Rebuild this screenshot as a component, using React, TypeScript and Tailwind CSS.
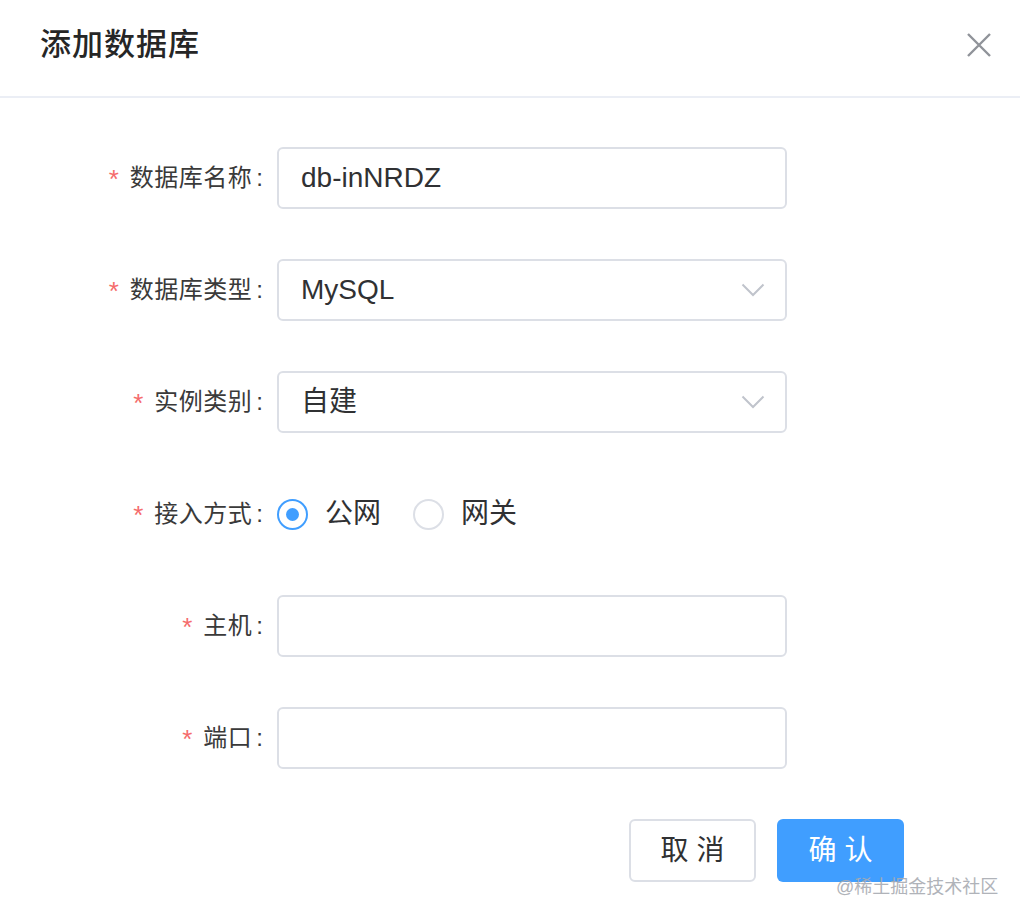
import React from 'react';

const Chevron = () => (
  <svg width="24" height="14" viewBox="0 0 24 14" fill="none">
    <path d="M1.5 1.5 L12 12 L22.5 1.5" stroke="#c0c4cc" strokeWidth="2" />
  </svg>
);

const Label = ({ text }: { text: string }) => (
  <div className="w-[277px] shrink-0 pr-[14px] flex justify-end items-center text-[24px] text-[#3a3a3a]">
    <span className="text-[#f56c6c] text-[26px] mr-[11px] mt-[2px]">*</span>
    <span className="tracking-[0.5px]">{text}</span>
    <span className="ml-[4px]">:</span>
  </div>
);

const Field = ({ value, select }: { value?: string; select?: boolean }) => (
  <div className="w-[510px] h-[62px] border-2 border-[#dcdfe6] rounded-[6px] flex items-center justify-between pl-[22px] pr-[20px] text-[28px] text-[#303133]">
    <span>{value}</span>
    {select && <Chevron />}
  </div>
);

const Radio = ({ label, checked }: { label: string; checked?: boolean }) => (
  <div className="flex items-center">
    <span
      className={
        checked
          ? 'w-[31px] h-[31px] rounded-full border-2 border-[#409eff] bg-white flex items-center justify-center'
          : 'w-[31px] h-[31px] rounded-full border-2 border-[#dcdfe6] bg-white'
      }
    >
      {checked && <span className="w-[13px] h-[13px] rounded-full bg-[#409eff]" />}
    </span>
    <span className="ml-[17px] text-[28px] text-[#303133]">{label}</span>
  </div>
);

export default function App() {
  return (
    <div
      className="relative w-[1020px] h-[922px] bg-white overflow-hidden"
      style={{ fontFamily: '"Liberation Sans", "Noto Sans CJK SC", sans-serif' }}
    >
      {/* header */}
      <div className="h-[98px] border-b-2 border-[#ebeef5] flex items-center justify-between pl-[40px] pr-[28px] pb-[6px]">
        <h1 className="text-[31px] font-medium text-[#262626] tracking-[1px]">添加数据库</h1>
        <svg width="26" height="26" viewBox="0 0 26 26" fill="none">
          <path d="M2 2 L24 24 M24 2 L2 24" stroke="#909399" strokeWidth="2.4" />
        </svg>
      </div>

      {/* form */}
      <div className="pt-[49px] flex flex-col gap-[50px]">
        <div className="flex h-[62px]">
          <Label text="数据库名称" />
          <Field value="db-inNRDZ" />
        </div>
        <div className="flex h-[62px]">
          <Label text="数据库类型" />
          <Field value="MySQL" select />
        </div>
        <div className="flex h-[62px]">
          <Label text="实例类别" />
          <Field value="自建" select />
        </div>
        <div className="flex h-[62px] items-center">
          <Label text="接入方式" />
          <div className="flex items-center gap-[32px]">
            <Radio label="公网" checked />
            <Radio label="网关" />
          </div>
        </div>
        <div className="flex h-[62px]">
          <Label text="主机" />
          <Field />
        </div>
        <div className="flex h-[62px]">
          <Label text="端口" />
          <Field />
        </div>
        <div className="flex justify-end pr-[116px] gap-[21px]">
          <button className="w-[127px] h-[63px] border-2 border-[#dcdfe6] rounded-[6px] bg-white text-[28px] text-[#303133] tracking-[8px] pl-[8px]">
            取消
          </button>
          <button className="w-[127px] h-[63px] rounded-[6px] bg-[#409eff] text-[28px] text-white tracking-[8px] pl-[8px]">
            确认
          </button>
        </div>
      </div>

      <div className="absolute left-[836px] top-[874px] text-[18px] text-[#a8abb2] opacity-90">@稀土掘金技术社区</div>
    </div>
  );
}
